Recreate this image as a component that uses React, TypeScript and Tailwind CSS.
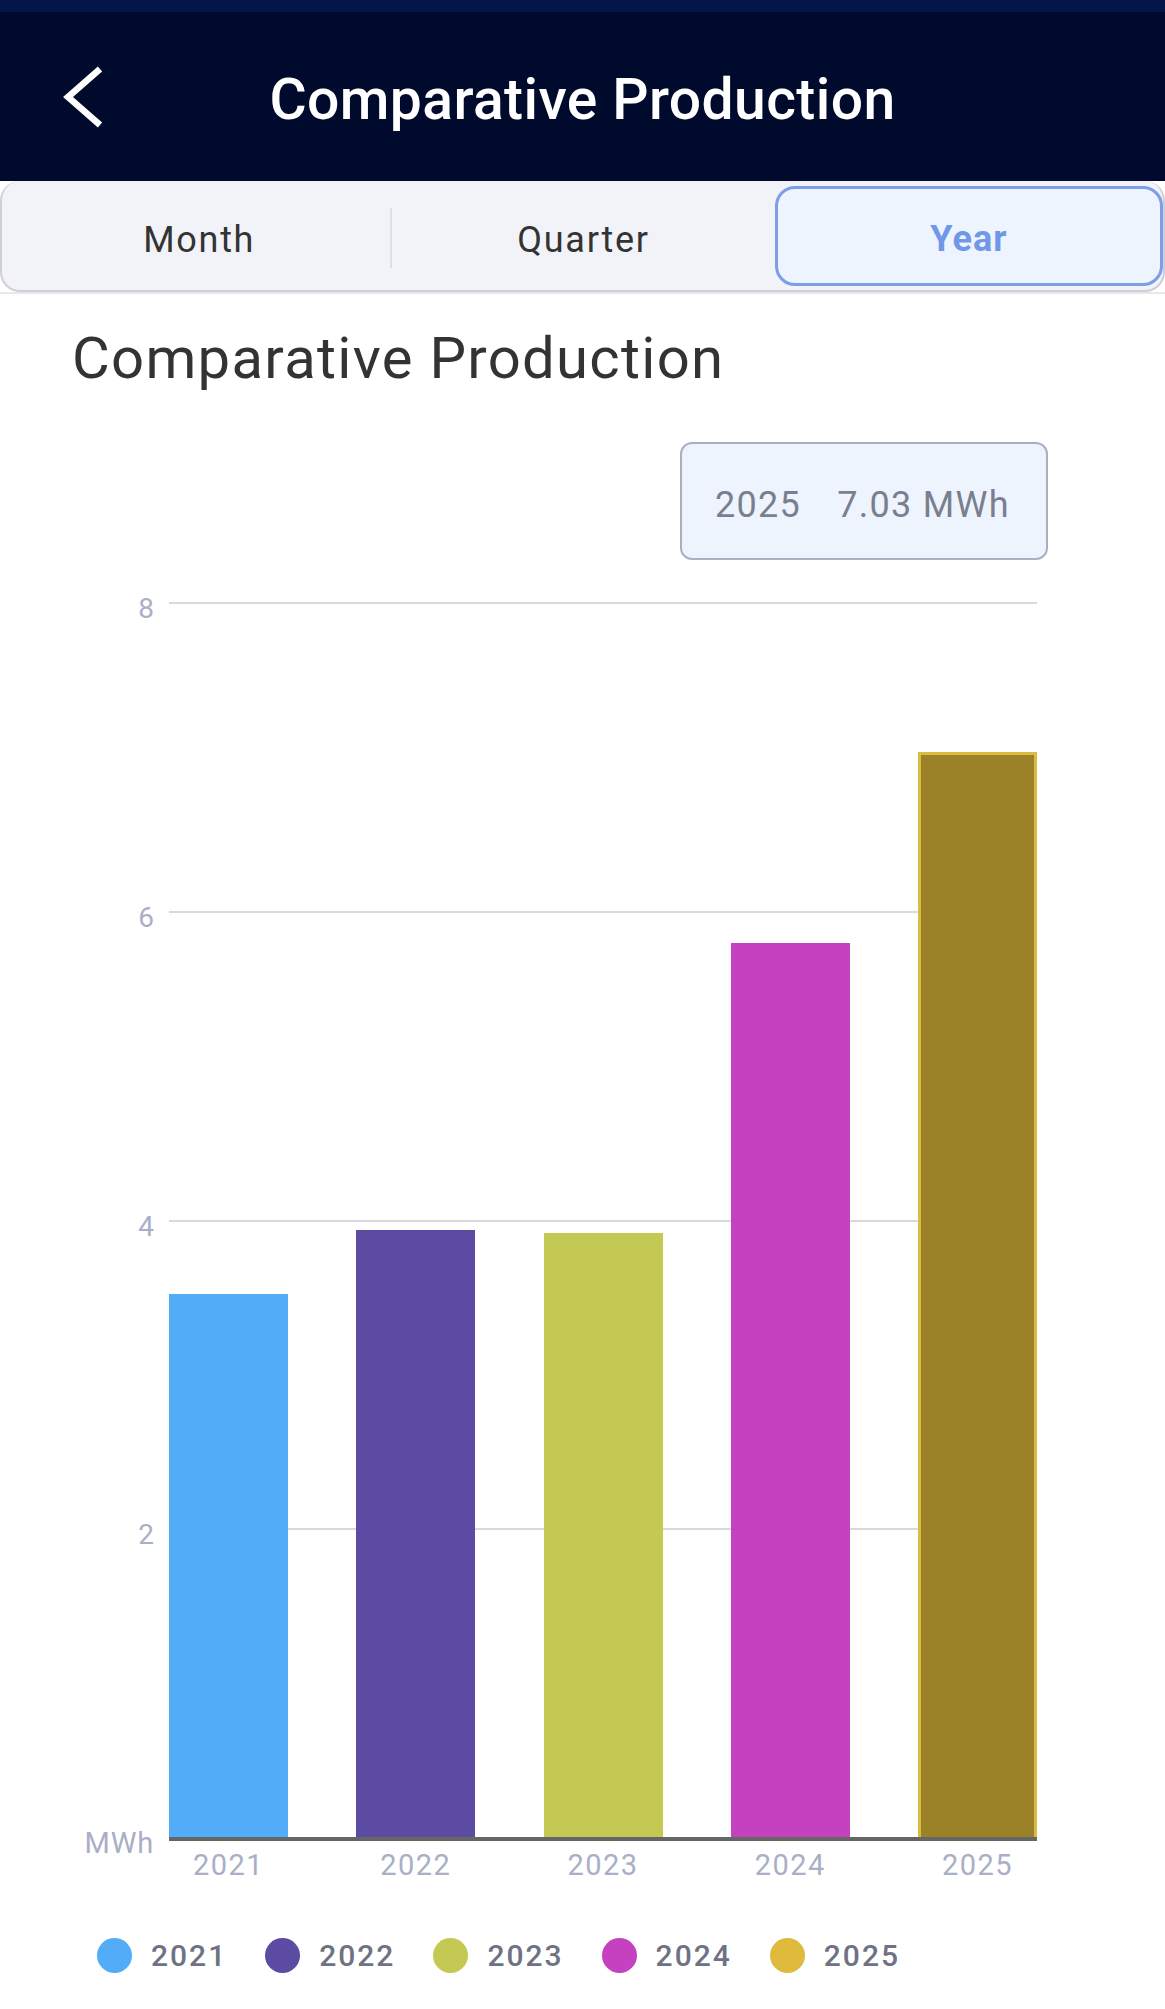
import React from 'react'

const BARS = [
  { year: '2021', value: 3.52, color: '#52acf7', legend: '#52acf7' },
  { year: '2022', value: 3.93, color: '#5c4ba3', legend: '#5c4ba3' },
  { year: '2023', value: 3.91, color: '#c3c953', legend: '#c3c953' },
  { year: '2024', value: 5.79, color: '#c441c0', legend: '#c441c0' },
  { year: '2025', value: 7.03, color: '#9b8229', legend: '#dfba3d' },
]

const PLOT_H = 1235
const PX_PER_UNIT = PLOT_H / 8
const TICKS = [8, 6, 4, 2]

function BackIcon() {
  return (
    <svg width="44" height="66" viewBox="0 0 44 66" fill="none">
      <polyline points="40,5 8,33 40,61" stroke="white" strokeWidth="6.5" strokeLinejoin="miter" />
    </svg>
  )
}

function Header() {
  return (
    <div className="border-t-[12px] border-[#03164a] bg-[#000a2c] h-[181px] flex items-center">
      <div className="w-[150px] pl-[60px] flex items-center">
        <BackIcon />
      </div>
      <div className="flex-1 pt-[6px] text-center text-white text-[57px] tracking-[0.4px] font-medium leading-none">
        Comparative Production
      </div>
      <div className="w-[150px]" />
    </div>
  )
}

function Tabs() {
  return (
    <div className="border-b-2 border-[#e8e8ea]">
      <div className="h-[111px] border-2 border-t-0 border-[#cfcfd3] rounded-[20px] bg-[#f1f3f8] flex items-stretch pl-[6px] pr-0 pt-[5px] pb-[4px] text-[36px]">
        <div className="flex-1 flex items-center justify-center pt-[8px] tracking-[1.7px] text-[#333333]">Month</div>
        <div className="w-[2px] self-center mt-[4px] h-[60px] bg-[#dedfe3]" />
        <div className="flex-1 flex items-center justify-center pt-[8px] tracking-[1.7px] text-[#333333]">Quarter</div>
        <div className="flex-1 flex items-center justify-center pt-[6px] tracking-[1px] font-bold text-[#7097e8] bg-[#eef4fd] border-[3px] border-[#7c9ee6] rounded-[20px]">
          Year
        </div>
      </div>
    </div>
  )
}

function Chart() {
  return (
    <div className="ml-[169px] w-[868px]">
      <div className="relative h-[1235px]">
        {TICKS.map(t => {
          const top = PLOT_H - t * PX_PER_UNIT
          return (
            <React.Fragment key={t}>
              <div className="absolute left-0 right-0 h-[2px] bg-[#d9d9dc]" style={{ top }} />
              <div
                className="absolute right-[calc(100%+15px)] text-[28px] leading-none text-[#a9afc6]"
                style={{ top: top - 7 }}
              >
                {t}
              </div>
            </React.Fragment>
          )
        })}
        <div
          className="absolute right-[calc(100%+15px)] text-[29px] tracking-[0.8px] leading-none text-[#a9afc6]"
          style={{ top: PLOT_H - 8 }}
        >
          MWh
        </div>
        <div className="relative h-full flex items-end justify-between">
          {BARS.map((b, i) => (
            <div
              key={b.year}
              className={i === 4 ? 'w-[119px] border-[3px] border-b-0 border-[#dcbc3e]' : 'w-[119px]'}
              style={{ height: b.value * PX_PER_UNIT, backgroundColor: b.color }}
            />
          ))}
        </div>
      </div>
      <div className="h-[4px] bg-[#666666]" />
      <div className="mt-[10px] flex justify-between">
        {BARS.map(b => (
          <div key={b.year} className="w-[119px] text-center text-[29px] tracking-[1.5px] leading-none text-[#a9afc6]">
            {b.year}
          </div>
        ))}
      </div>
    </div>
  )
}

function Legend() {
  return (
    <div className="mt-[58px] pl-[97px] flex items-center gap-[38px]">
      {BARS.map(b => (
        <div key={b.year} className="flex items-center gap-[19px]">
          <div className="w-[35px] h-[35px] rounded-full" style={{ backgroundColor: b.legend }} />
          <span className="text-[30px] font-medium leading-none tracking-[2px] text-[#6e7284]">{b.year}</span>
        </div>
      ))}
    </div>
  )
}

export default function App() {
  return (
    <div className="w-[1165px] min-h-[2009px] bg-white font-['Roboto',sans-serif]">
      <Header />
      <Tabs />
      <div className="pl-[72px] mt-[35px] text-[58px] tracking-[1.3px] leading-none text-[#333333]">
        Comparative Production
      </div>
      <div className="mt-[55px] flex justify-end pr-[117px]">
        <div className="w-[368px] h-[118px] bg-[#eef4fd] border-2 border-[#a9b0c4] rounded-[12px] flex items-center pl-[33px] pt-[8px] gap-[36px] text-[36px] tracking-[1.3px] text-[#7a7f8f]">
          <span>2025</span>
          <span>7.03 MWh</span>
        </div>
      </div>
      <div className="mt-[42px]">
        <Chart />
      </div>
      <Legend />
    </div>
  )
}
